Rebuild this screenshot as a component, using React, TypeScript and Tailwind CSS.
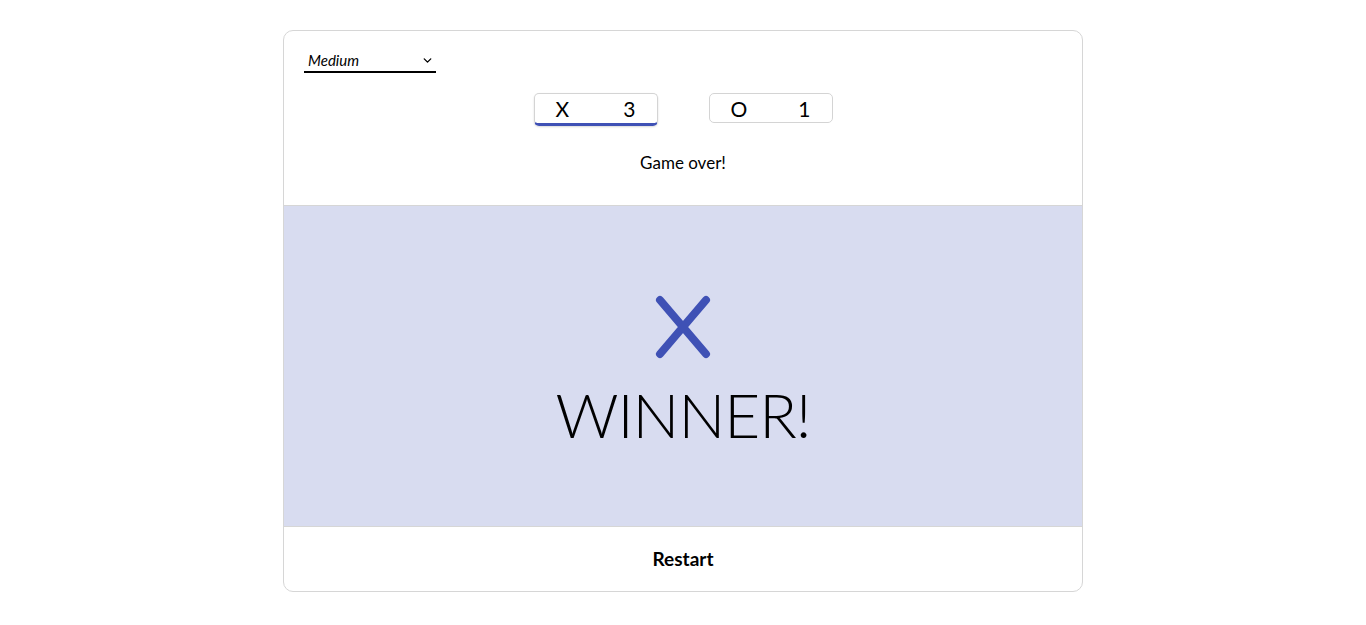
import { ChevronDown } from 'lucide-react'

const ScoreBox = ({ mark, score, active }: { mark: string; score: number; active?: boolean }) => {
  return (
    <div
      className={`w-[124px] h-[30px] rounded-[5px] border border-[#d4d4d4] flex items-center justify-between px-[21px] text-[21px] leading-none ${
        active ? 'border-b-[3px] border-b-[#3f51b5] h-[33px] shadow-[0_1px_2px_rgba(0,0,0,0.15)]' : ''
      }`}
    >
      <span>{mark}</span>
      <span>{score}</span>
    </div>
  )
}

const App = () => {
  return (
    <div className="w-full min-h-[625px] bg-white flex justify-center pt-[30px] text-black" style={{ fontFamily: 'Lato, "Noto Sans", sans-serif' }}>
      <div className="w-[800px] h-[562px] rounded-[10px] border border-[#d6d6d6] flex flex-col overflow-hidden">
        {/* header */}
        <div className="h-[174px] shrink-0 flex flex-col px-5 pt-[18px]">
          <div className="w-[132px] h-[24px] border-b-2 border-black flex items-center justify-between pl-1 pr-[2px] text-[15px] italic">
            <span>Medium</span>
            <ChevronDown size={13} strokeWidth={2.5} />
          </div>
          <div className="flex justify-center gap-[51px] mt-[20px] h-[33px]">
            <ScoreBox mark="X" score={3} active />
            <ScoreBox mark="O" score={1} />
          </div>
          <div className="text-center text-[17px] mt-[24px]">Game over!</div>
        </div>

        {/* result */}
        <div className="flex-1 bg-[#d8dcf0] border-y border-[#d6d6d6] flex flex-col items-center justify-center pt-[8px]">
          <svg width="56" height="64" viewBox="0 0 56 64">
            <path d="M5 5 L51 59 M51 5 L5 59" stroke="#3f51b5" strokeWidth="8" strokeLinecap="round" />
          </svg>
          <div className="text-[62px] font-light leading-none mt-[24px] tracking-[-1px]">WINNER!</div>
        </div>

        {/* footer */}
        <div className="h-[64px] shrink-0 flex items-center justify-center text-[19px] font-bold">Restart</div>
      </div>
    </div>
  )
}

export default App
